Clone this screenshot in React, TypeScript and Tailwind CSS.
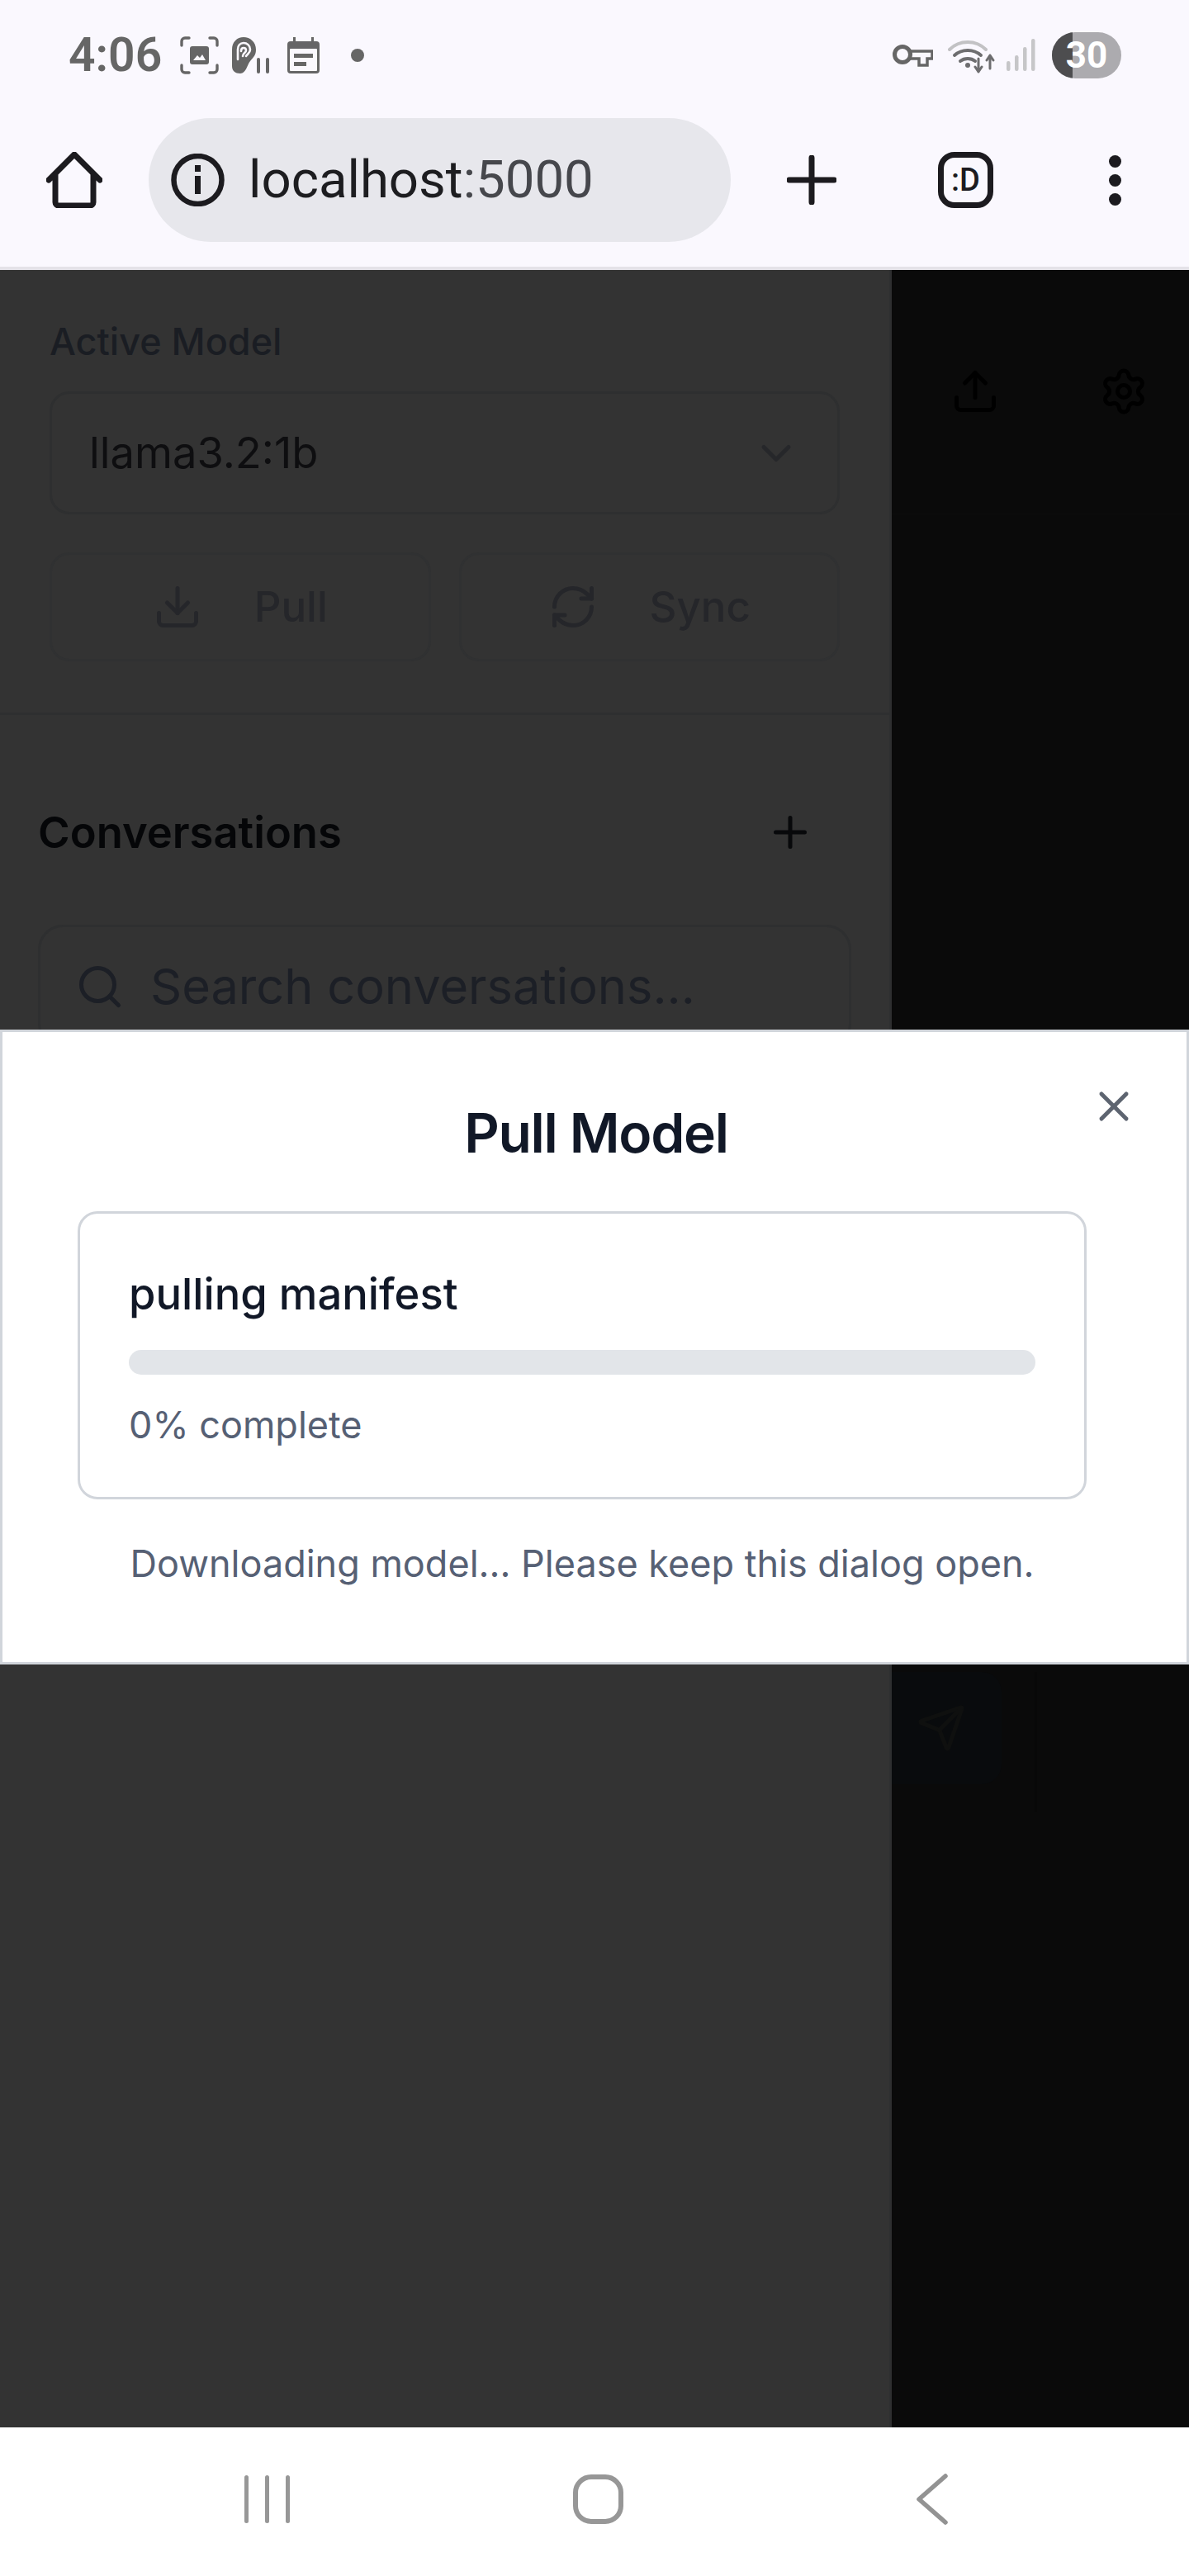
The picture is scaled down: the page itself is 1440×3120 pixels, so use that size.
import { ChevronDown, Download, Plus, RefreshCw, Search, Send, Settings, Upload, X } from "lucide-react";

function Focus() {
  return (
    <svg width="47" height="46" viewBox="0 0 47 46" fill="none" className="ml-[24px]">
      <g stroke="#666" strokeWidth="3.4" strokeLinecap="round">
        <path d="M2 11V6a4 4 0 0 1 4-4h5M36 2h5a4 4 0 0 1 4 4v5M45 35v5a4 4 0 0 1-4 4h-5M11 44H6a4 4 0 0 1-4-4v-5" />
      </g>
      <rect x="12" y="12" width="23" height="22" rx="3" fill="#666" />
      <path d="M16 29l5-6 3 3 3-4 4 7z" fill="#faf8fe" />
    </svg>
  );
}

function Ear() {
  return (
    <svg width="46" height="44" viewBox="0 0 46 44" fill="none" className="ml-[16px]">
      <path d="M0 15C0 6 6 0 14 0s15 6 15 15c0 7-3 9-7 14-4 5-5 15-12 15-6 0-10-3-10-9z" fill="#666" />
      <path d="M7 27V15c0-5 3-8 7-8s8 3 8 8c0 4-3 5-5 8M11 17c0-3 1-4 3-4s3 1 3 3c0 3-4 3-4 7" stroke="#faf8fe" strokeWidth="2.6" strokeLinecap="round" />
      <rect x="30" y="25" width="4" height="19" rx="2" fill="#666" />
      <rect x="41" y="25" width="4" height="19" rx="2" fill="#666" />
    </svg>
  );
}

function Calendar() {
  return (
    <svg width="39" height="44" viewBox="0 0 39 44" fill="none" className="ml-[21px]">
      <rect x="7" y="0" width="3" height="8" fill="#666" />
      <rect x="29" y="0" width="3" height="8" fill="#666" />
      <rect x="0" y="5" width="39" height="39" rx="4" fill="#666" />
      <rect x="3" y="14" width="33" height="27" rx="1" fill="#faf8fe" />
      <rect x="8" y="20" width="23" height="5" fill="#666" />
      <rect x="8" y="30" width="15" height="5" fill="#666" />
    </svg>
  );
}

function Key() {
  return (
    <svg width="49" height="28" viewBox="0 0 49 28" fill="none" className="ml-auto">
      <circle cx="12" cy="13" r="9.5" stroke="#666" strokeWidth="5" />
      <path d="M21 9h27v9h-6v8h-10v-8H21" stroke="#666" strokeWidth="3.5" />
    </svg>
  );
}

function Wifi() {
  return (
    <svg width="58" height="44" viewBox="0 0 58 44" fill="none" className="ml-[18px]">
      <path d="M2 15C14 3 34 3 46 15" stroke="#c2c2c4" strokeWidth="4" strokeLinecap="round" />
      <path d="M8 22c9-8 23-8 32 0" stroke="#6d6d6f" strokeWidth="4" strokeLinecap="round" />
      <path d="M15 29c5-4 13-4 18 0" stroke="#6d6d6f" strokeWidth="4" strokeLinecap="round" />
      <circle cx="24" cy="34" r="3" fill="#6d6d6f" />
      <path d="M37 26v16M33 36l4 6 4-6M51 38V22M47 28l4-6 4 6" stroke="#6d6d6f" strokeWidth="3" strokeLinecap="round" strokeLinejoin="round" />
    </svg>
  );
}

function Signal() {
  return (
    <svg width="35" height="39" viewBox="0 0 35 39" fill="#c6c6c8" className="ml-[13px]">
      <rect x="0" y="27" width="4.5" height="12" rx="2.2" />
      <rect x="10" y="20" width="4.5" height="19" rx="2.2" />
      <rect x="20" y="10" width="4.5" height="29" rx="2.2" />
      <rect x="30" y="0" width="4.5" height="39" rx="2.2" />
    </svg>
  );
}

function Home() {
  return (
    <svg width="68" height="68" viewBox="0 0 68 68" fill="none">
      <path d="M3 34 34 3l31 31M11 27v34a4 4 0 0 0 4 4h38a4 4 0 0 0 4-4V27" stroke="#1c1b1f" strokeWidth="7" strokeLinecap="round" strokeLinejoin="round" />
    </svg>
  );
}

function Info() {
  return (
    <svg width="65" height="64" viewBox="0 0 65 64" fill="none">
      <circle cx="32.5" cy="32" r="29" stroke="#1c1b1f" strokeWidth="6.5" />
      <rect x="29" y="14" width="7" height="8" fill="#1c1b1f" />
      <rect x="29" y="27" width="7" height="22" fill="#1c1b1f" />
    </svg>
  );
}

export default function App() {
  return (
    <div className="relative flex h-[3120px] w-[1440px] flex-col overflow-hidden bg-white [font-family:Inter,sans-serif]">
      <header className="h-[327px] shrink-0 border-b-[4px] border-[#e4e2e8] bg-[#faf8fe] [font-family:Roboto,sans-serif]">
        <div className="flex h-[133px] items-center pl-[83px] pr-[82px]">
          <span className="w-[111px] text-[57px] font-semibold leading-none text-[#666666]">4:06</span>
          <Focus />
          <Ear />
          <Calendar />
          <span className="ml-[38px] h-[16px] w-[16px] rounded-full bg-[#666666]" />
          <Key />
          <Wifi />
          <Signal />
          <div className="relative ml-[20px] flex h-[56px] w-[84px] items-center justify-center overflow-hidden rounded-[28px] bg-[#acabaf]">
            <span className="absolute inset-y-0 left-0 w-[25px] bg-[#4d4d4f]" />
            <span className="relative text-[44px] font-bold leading-none text-white">30</span>
          </div>
        </div>
        <div className="mt-[10px] flex h-[150px] items-center pl-[56px]">
          <Home />
          <div className="ml-[56px] flex h-[150px] w-[705px] items-center rounded-[75px] bg-[#e7e7ec] pl-[27px]">
            <Info />
            <span className="ml-[29px] text-[63.5px] leading-none text-[#1d1d20]">
              localhost<span className="text-[#46474c]">:5000</span>
            </span>
          </div>
          <svg width="60" height="60" viewBox="0 0 60 60" className="ml-[68px]" fill="none">
            <path d="M30 3v54M3 30h54" stroke="#1c1b1f" strokeWidth="7" strokeLinecap="round" />
          </svg>
          <div className="ml-[123px] flex h-[68px] w-[67px] items-center justify-center rounded-[20px] border-[7px] border-[#1c1b1f] text-[38px] font-medium leading-none text-[#1c1b1f]">
            :D
          </div>
          <div className="ml-[140px] flex flex-col gap-[8px]">
            <span className="h-[15px] w-[15px] rounded-full bg-[#1c1b1f]" />
            <span className="h-[15px] w-[15px] rounded-full bg-[#1c1b1f]" />
            <span className="h-[15px] w-[15px] rounded-full bg-[#1c1b1f]" />
          </div>
        </div>
      </header>

      <main className="flex min-h-0 flex-1">
        <aside className="w-[1080px] shrink-0 border-r-[3px] border-[#2e2f30] bg-[#333333]">
          <section className="border-b-[3px] border-[#2e2f30] px-[60px] pb-[62px] pt-[57px]">
            <div className="mb-[30px] text-[45px] font-medium leading-[60px] text-[#1a1d23]">Active Model</div>
            <div className="flex h-[149px] items-center justify-between rounded-[24px] border-[3px] border-[#2e2f30] pl-[45px] pr-[44px]">
              <span className="text-[52.5px] leading-none text-[#0e0e10]">llama3.2:1b</span>
              <ChevronDown size={60} strokeWidth={2} color="#26272a" />
            </div>
            <div className="mt-[46px] grid grid-cols-2 gap-[34px]">
              <div className="flex h-[132px] items-center justify-center gap-[63px] rounded-[24px] border-[3px] border-[#303132] text-[51px] font-medium text-[#25262a]">
                <Download size={60} strokeWidth={2} color="#25262a" />
                <span>Pull</span>
              </div>
              <div className="flex h-[132px] items-center justify-center gap-[63px] rounded-[24px] border-[3px] border-[#303132] text-[51px] font-medium text-[#25262a]">
                <RefreshCw size={60} strokeWidth={2} color="#25262a" />
                <span>Sync</span>
              </div>
            </div>
          </section>
          <section className="px-[46px] pt-[106px]">
            <div className="flex h-[72px] items-center justify-between pr-[44px]">
              <span className="text-[52.5px] font-semibold leading-[72px] text-[#050608]">Conversations</span>
              <Plus size={60} strokeWidth={2} color="#08090b" />
            </div>
            <div className="mt-[76px] flex h-[150px] items-center rounded-[30px] border-[3px] border-[#2e2f30] pl-[42px]">
              <Search size={60} strokeWidth={2} color="#1c1f26" />
              <span className="ml-[31px] text-[59.5px] leading-none text-[#1c1f26]">Search conversations...</span>
            </div>
          </section>
        </aside>
        <div className="min-w-0 flex-1 bg-[#0a0a0a]">
          <div className="flex h-[297px] items-center justify-end gap-[120px] border-b-[3px] border-[#0b0b0b] pr-[49px]">
            <Upload size={60} strokeWidth={2} color="#000000" />
            <Settings size={60} strokeWidth={2} color="#000000" />
          </div>
          <div className="mt-[1401px] flex">
            <div className="flex h-[136px] w-[133px] items-center justify-center rounded-r-[24px] bg-[#090b0d] pr-[14px]">
              <Send size={60} strokeWidth={2} color="#0f100f" />
            </div>
            <div className="ml-[40px] h-[170px] w-[3px] bg-[#080808]" />
          </div>
        </div>
      </main>

      <nav className="flex h-[180px] shrink-0 items-center bg-white pb-[6px] pl-[296px]">
        <div className="flex gap-[20px]">
          <span className="h-[58px] w-[5px] rounded-full bg-[#979797]" />
          <span className="h-[58px] w-[5px] rounded-full bg-[#979797]" />
          <span className="h-[58px] w-[5px] rounded-full bg-[#979797]" />
        </div>
        <span className="ml-[343px] h-[60px] w-[61px] rounded-[22px] border-[6px] border-[#979797]" />
        <svg width="40" height="62" viewBox="0 0 40 62" fill="none" className="ml-[354px]">
          <path d="M36 3 4 31l32 28" stroke="#939393" strokeWidth="5.5" strokeLinecap="round" strokeLinejoin="round" />
        </svg>
      </nav>

      <div className="absolute left-0 top-[1247px] h-[769px] w-[1440px] border-[3px] border-[#d1d5db] bg-white pl-[91px]">
        <button className="absolute right-[58px] top-[60px] text-[#5d6470]">
          <X size={60} strokeWidth={2} />
        </button>
        <h2 className="-ml-[87px] pt-[82px] text-center text-[66px] font-semibold leading-[80px] tracking-[-0.02em] text-[#111827]">Pull Model</h2>
        <div className="mt-[55px] h-[349px] w-[1222px] rounded-[24px] border-[3px] border-[#d1d5db] pl-[59px] pt-[61px]">
          <div className="text-[52.5px] font-medium leading-[72px] text-[#111827]">pulling manifest</div>
          <div className="mt-[32px] h-[30px] w-[1098px] rounded-full bg-[#e2e5e9]" />
          <div className="mt-[31px] text-[45px] leading-[60px] text-[#566074]">0% complete</div>
        </div>
        <p className="mt-[48px] w-[1222px] text-center text-[45px] leading-[60px] text-[#566074]">
          Downloading model... Please keep this dialog open.
        </p>
      </div>
    </div>
  );
}
